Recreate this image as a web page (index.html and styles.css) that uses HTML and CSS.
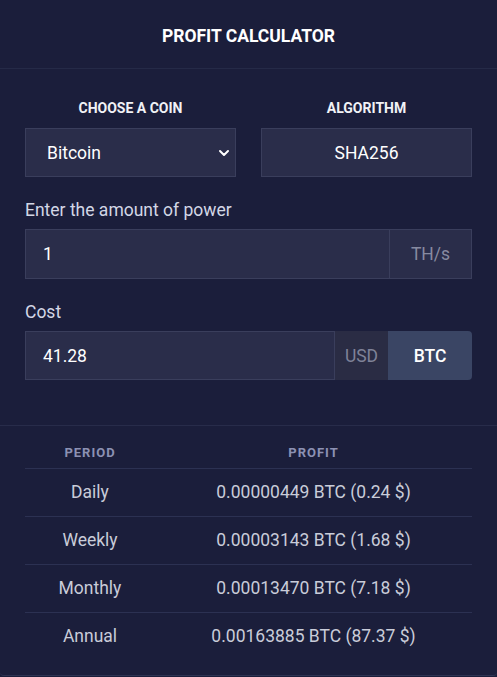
FILE: index.html
```html
<!DOCTYPE html>
<html lang="en">
<head>
    <meta charset="UTF-8">
    <meta name="viewport" content="width=device-width, initial-scale=1.0">
    <title>Profit Calculator</title>
    <link rel="stylesheet" href="styles.css">
</head>
<body>
    <div class="calc">
        <header class="calc-head">
            <h1>PROFIT CALCULATOR</h1>
        </header>
        <div class="calc-form">
            <div class="row">
                <div class="col">
                    <div class="cap">CHOOSE A COIN</div>
                    <div class="field select">
                        <span>Bitcoin</span>
                        <svg width="12" height="8" viewBox="0 0 12 8"><path d="M2 2l4 4 4-4" fill="none" stroke="#fff" stroke-width="2" stroke-linecap="round" stroke-linejoin="round"/></svg>
                    </div>
                </div>
                <div class="col">
                    <div class="cap">ALGORITHM</div>
                    <div class="field center">SHA256</div>
                </div>
            </div>
            <div class="group">
                <label class="lbl">Enter the amount of power</label>
                <div class="input-group">
                    <div class="field grow">1</div>
                    <div class="addon unit">TH/s</div>
                </div>
            </div>
            <div class="group">
                <label class="lbl">Cost</label>
                <div class="input-group">
                    <div class="field grow">41.28</div>
                    <div class="addon usd">USD</div>
                    <div class="addon btc">BTC</div>
                </div>
            </div>
        </div>
        <div class="results">
            <table>
                <thead>
                    <tr><th class="period">PERIOD</th><th>PROFIT</th></tr>
                </thead>
                <tbody>
                    <tr><td>Daily</td><td>0.00000449 BTC (0.24 $)</td></tr>
                    <tr><td>Weekly</td><td>0.00003143 BTC (1.68 $)</td></tr>
                    <tr><td>Monthly</td><td>0.00013470 BTC (7.18 $)</td></tr>
                    <tr><td>Annual</td><td>0.00163885 BTC (87.37 $)</td></tr>
                </tbody>
            </table>
        </div>
    </div>
</body>
</html>
```

FILE: styles.css
```css
body {
    margin: 0;
    padding: 0;
    background: #1b1e3b;
    font-family: Roboto, "Liberation Sans", Arial, sans-serif;
    color: #fff;
}
.calc {
    width: 497px;
    height: 676px;
    box-sizing: border-box;
    background: #1b1e3b;
    border-bottom: 1px solid #2e3352;
    border-radius: 0 0 4px 4px;
}
.calc-head {
    height: 69px;
    box-sizing: border-box;
    padding-top: 3px;
    border-bottom: 1px solid #252a47;
    display: flex;
    align-items: center;
    justify-content: center;
}
.calc-head h1 {
    margin: 0;
    font-size: 17.5px;
    font-weight: 700;
    color: #fff;
}
.calc-form {
    padding: 31px 25px 45px;
    border-bottom: 1px solid #282c4a;
}
.row {
    display: flex;
    gap: 25px;
}
.col {
    flex: 1;
}
.cap {
    text-align: center;
    font-size: 14px;
    font-weight: 700;
    line-height: 17px;
    margin-bottom: 11px;
    color: #f1f2f6;
}
.field {
    height: 49px;
    box-sizing: border-box;
    background: #2a2d4a;
    border: 1px solid #3a3e5c;
    display: flex;
    align-items: center;
    padding: 0 17px;
    font-size: 17.5px;
    color: #fff;
}
.select {
    justify-content: space-between;
    padding: 0 5px 0 21px;
}
.center {
    justify-content: center;
}
.group {
    margin-top: 23px;
}
.lbl {
    display: block;
    font-size: 17.5px;
    line-height: 21px;
    margin-bottom: 8px;
    color: #d3d7e6;
}
.input-group {
    display: flex;
}
.input-group .field {
    height: 50px;
}
.grow {
    flex: 1;
}
.addon {
    box-sizing: border-box;
    height: 50px;
    display: flex;
    align-items: center;
    justify-content: center;
    font-size: 17.5px;
    border: 1px solid #3a3e5c;
    border-left: none;
}
.unit {
    width: 82px;
    background: #2a2d4a;
    color: #878aa0;
}
.usd {
    width: 53px;
    background: #2a2c44;
    color: #7f8298;
    height: 49px;
    border: none;
}
.btc {
    width: 84px;
    height: 49px;
    background: #3a4564;
    color: #fff;
    font-weight: 500;
    border: none;
    border-radius: 0 4px 4px 0;
}
.group:last-child .input-group .field {
    height: 49px;
}
.results {
    padding: 0 25px;
}
table {
    width: 100%;
    border-collapse: collapse;
}
th {
    height: 42px;
    box-sizing: border-box;
    padding: 12px 0 0;
    font-size: 13px;
    font-weight: 700;
    letter-spacing: 1px;
    color: #8c91b3;
    text-align: center;
    border-bottom: 1px solid #2c3152;
}
.period {
    width: 130px;
}
td {
    height: 47px;
    text-align: center;
    font-size: 17.5px;
    color: #c9ccd9;
    padding: 0;
    border-bottom: 1px solid #2c3152;
}
tbody tr:last-child td {
    border-bottom: none;
}
```
